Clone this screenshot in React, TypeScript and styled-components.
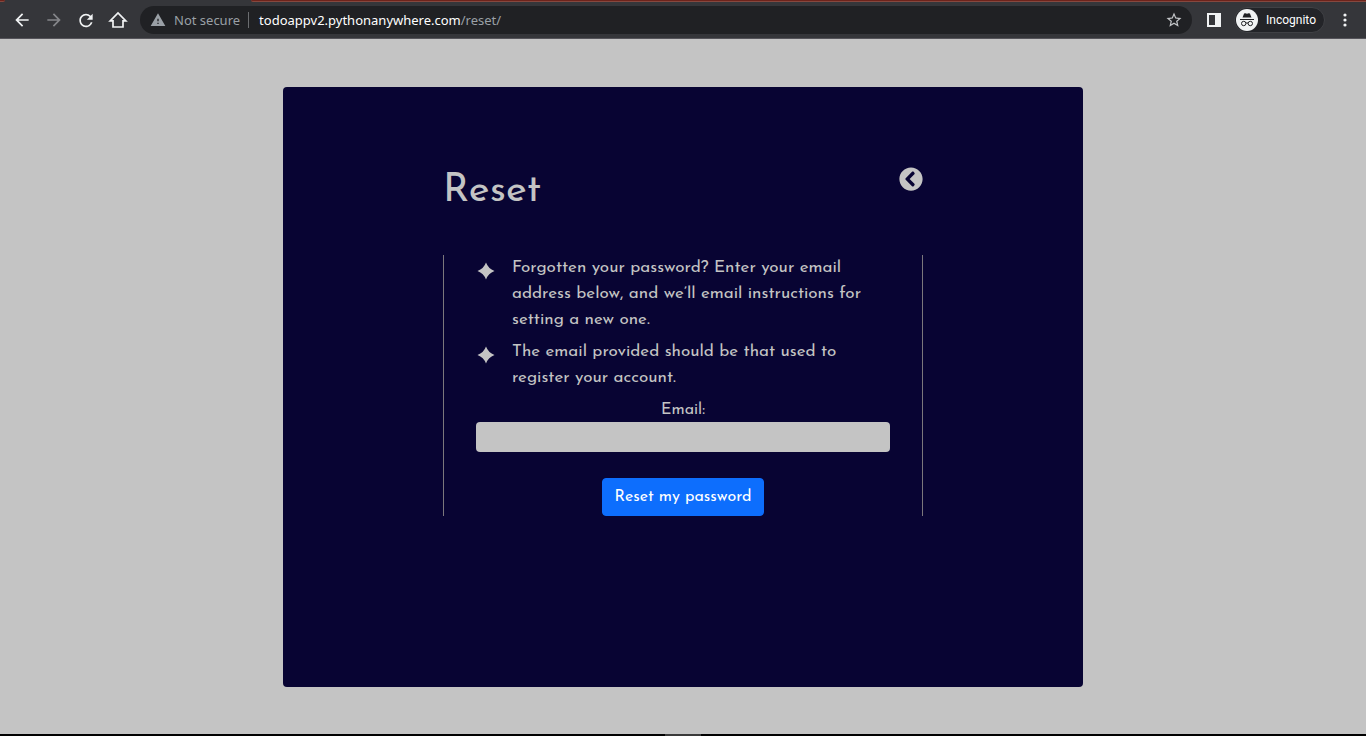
import React from "react";
import styled, { createGlobalStyle } from "styled-components";
import { MdArrowBack, MdArrowForward, MdRefresh, MdStarBorder, MdWarning } from "react-icons/md";
import { FaChevronCircleLeft } from "react-icons/fa";

const GlobalStyle = createGlobalStyle`
  *, *::before, *::after { box-sizing: border-box; }
  body { margin: 0; background: #c4c4c4; }
`;

const Page = styled.div`
  min-height: 100vh;
  display: flex;
  flex-direction: column;
`;

const Browser = styled.header`
  background: #35363a;
  border-bottom: 1px solid #55545a;
  font-family: "Segoe UI", "Noto Sans", sans-serif;
`;

const TabEdge = styled.div`
  height: 2px;
  display: grid;
  grid-template-columns: 5px 1fr;
  column-gap: 246px;
`;

const InactiveTabs = styled.span<{ $side: "left" | "right" }>`
  background: #6e231b;
  border-bottom: 1px solid #85483f;
  border-radius: ${(p) => (p.$side === "left" ? "0 0 4px 0" : "0 0 0 4px")};
`;

const Toolbar = styled.nav`
  height: 36px;
  padding: 0 11px 0 12px;
  display: flex;
  align-items: center;
`;

const NavButtons = styled.div`
  display: flex;
  gap: 12px;
  margin-right: 12px;
`;

const IconButton = styled.button<{ $color?: string }>`
  width: 20px;
  height: 20px;
  padding: 0;
  border: 0;
  background: none;
  color: ${(p) => p.$color ?? "#f1f3f4"};
  display: flex;
  align-items: center;
  justify-content: center;
  flex: none;
`;

const AddressBar = styled.div`
  flex: 1;
  min-width: 0;
  height: 28px;
  padding: 0 8px 0 10px;
  border-radius: 14px;
  background: #202124;
  display: flex;
  align-items: center;
  font-size: 13px;
  line-height: 20px;
  color: #9aa0a6;
`;

const Security = styled.button`
  display: flex;
  align-items: center;
  gap: 8px;
  padding: 0 8px 0 0;
  border: 0;
  border-right: 1px solid #6b6d70;
  height: 16px;
  background: none;
  font: inherit;
  color: inherit;
`;

const Address = styled.div`
  flex: 1;
  min-width: 0;
  padding-left: 10px;
  overflow: hidden;
  white-space: nowrap;
  outline: none;
`;

const Host = styled.span`
  color: #ffffff;
`;

const Actions = styled.div`
  display: flex;
  align-items: center;
  gap: 10px;
  margin-left: 12px;
`;

const Incognito = styled.button`
  height: 26px;
  padding: 0 8px 0 1px;
  border: 1px solid #404145;
  border-radius: 13px;
  background: #232428;
  color: #ffffff;
  font: 12px/20px "Segoe UI", Roboto, sans-serif;
  display: flex;
  align-items: center;
  gap: 8px;
`;

const Main = styled.main`
  flex: 1;
  padding: 48px 16px 47px;
  font-family: "Josefin Sans", Lato, sans-serif;
  font-size: 17px;
  line-height: 26px;
  color: #c4c4c4;
`;

const Card = styled.section`
  max-width: 800px;
  min-height: 600px;
  margin: 0 auto;
  padding: 80px 0;
  background: #080433;
  border-radius: 4px;
`;

const Content = styled.div`
  width: 60%;
  margin: 0 auto;
`;

const Heading = styled.div`
  display: flex;
  justify-content: space-between;
  align-items: flex-start;
  margin-bottom: 40px;
`;

const Title = styled.h1`
  margin: 0;
  font-size: 40px;
  line-height: 48px;
  font-weight: 400;
`;

const BackLink = styled.a`
  display: flex;
  color: inherit;
`;

const Form = styled.form`
  border: solid #7b777c;
  border-width: 0 1px;
  padding: 0 32px;
  display: flex;
  flex-direction: column;
  align-items: center;
`;

const Notes = styled.ul`
  align-self: stretch;
  margin: 0 0 7px;
  padding: 0;
  list-style: none;
  display: grid;
  gap: 6px;
`;

const Note = styled.li`
  display: flex;
  gap: 16px;
`;

const Bullet = styled.svg`
  flex: none;
  width: 20px;
  height: 32px;
`;

const Label = styled.label`
  font-size: 16px;
  line-height: 24px;
`;

const EmailInput = styled.input`
  width: 100%;
  height: 30px;
  margin-bottom: 26px;
  padding: 2px 8px;
  border: 0;
  border-radius: 4px;
  background: #c4c4c4;
  font: inherit;
  color: #080433;
`;

const Submit = styled.button`
  height: 38px;
  padding: 0 12px;
  border: 1px solid #0d6efd;
  border-radius: 4px;
  background: #0d6efd;
  color: #ffffff;
  font: inherit;
  font-size: 16px;
`;

const Taskbar = styled.footer`
  height: 2px;
  background: #000000;
  display: flex;
  justify-content: center;
`;

const ActiveApp = styled.span`
  width: 36px;
  background: #3a3a3a;
`;

const HomeIcon = () => (
  <svg width="20" height="20" viewBox="0 0 20 20" fill="none" stroke="currentColor" strokeWidth="1.700" aria-hidden="true">
    <path d="M2.200 10.800H5V17h10v-6.200h2.800L10 3z" />
  </svg>
);

const PanelIcon = () => (
  <svg width="14" height="14" viewBox="0 0 14 14" aria-hidden="true">
    <path fill="currentColor" fillRule="evenodd" d="M0 0h14v14H0zM2 2v10h6V2z" />
  </svg>
);

const IncognitoIcon = () => (
  <svg width="22" height="22" viewBox="0 0 22 22" aria-hidden="true">
    <circle cx="11" cy="11" r="11" fill="#f1f3f4" />
    <path fill="#202124" d="M6.5 8.500 8 4.8q.3-.9 1.2-.6l1.8.5 1.8-.5q.9-.3 1.2.6L15.500 8.500zM4 10h14v1H4z" />
    <g fill="none" stroke="#202124" strokeWidth="1">
      <circle cx="7.700" cy="14.500" r="2.200" />
      <circle cx="14.300" cy="14.500" r="2.200" />
      <path d="M9.900 14.200q1.100-.7 2.200 0" />
    </g>
  </svg>
);

const MenuIcon = () => (
  <svg width="4" height="14" viewBox="0 0 4 14" fill="currentColor" aria-hidden="true">
    <circle cx="2" cy="2" r="1.600" />
    <circle cx="2" cy="7" r="1.600" />
    <circle cx="2" cy="12" r="1.600" />
  </svg>
);

const notes = [
  "Forgotten your password? Enter your email address below, and we’ll email instructions for setting a new one.",
  "The email provided should be that used to register your account.",
];

export default function App() {
  return (
    <Page>
      <GlobalStyle />
      <Browser>
        <TabEdge>
          <InactiveTabs $side="left" />
          <InactiveTabs $side="right" />
        </TabEdge>
        <Toolbar aria-label="Browser">
          <NavButtons>
            <IconButton aria-label="Back"><MdArrowBack size={20} /></IconButton>
            <IconButton aria-label="Forward" $color="#85868a"><MdArrowForward size={20} /></IconButton>
            <IconButton aria-label="Reload"><MdRefresh size={21} /></IconButton>
            <IconButton aria-label="Home"><HomeIcon /></IconButton>
          </NavButtons>
          <AddressBar>
            <Security type="button"><MdWarning size={16} />Not secure</Security>
            <Address role="textbox" aria-label="Address" contentEditable suppressContentEditableWarning spellCheck={false}>
              <Host>todoappv2.pythonanywhere.com</Host>/reset/
            </Address>
            <IconButton aria-label="Bookmark this page" $color="#c4c6c9"><MdStarBorder size={18} /></IconButton>
          </AddressBar>
          <Actions>
            <IconButton aria-label="Side panel"><PanelIcon /></IconButton>
            <Incognito type="button"><IncognitoIcon />Incognito</Incognito>
            <IconButton aria-label="Menu"><MenuIcon /></IconButton>
          </Actions>
        </Toolbar>
      </Browser>
      <Main>
        <Card>
          <Content>
            <Heading>
              <Title>Reset</Title>
              <BackLink href="#" aria-label="Back"><FaChevronCircleLeft size={24} /></BackLink>
            </Heading>
            <Form onSubmit={(e) => e.preventDefault()}>
              <Notes>
                {notes.map((text) => (
                  <Note key={text}>
                    <Bullet viewBox="0 0 20 32" aria-hidden="true">
                      <path fill="currentColor" d="M10 7.500q2.300 6.200 8.500 8.500-6.200 2.300-8.500 8.500-2.300-6.200-8.500-8.500 6.200-2.300 8.500-8.500z" />
                    </Bullet>
                    <span>{text}</span>
                  </Note>
                ))}
              </Notes>
              <Label htmlFor="email">Email:</Label>
              <EmailInput id="email" type="email" />
              <Submit type="submit">Reset my password</Submit>
            </Form>
          </Content>
        </Card>
      </Main>
      <Taskbar><ActiveApp /></Taskbar>
    </Page>
  );
}
